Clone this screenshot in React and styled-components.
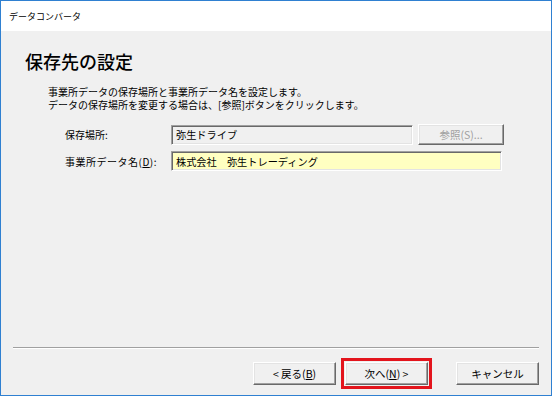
import styled, { createGlobalStyle } from 'styled-components';

const GlobalStyle = createGlobalStyle`
  * { box-sizing: border-box; }
  html, body {
    margin: 0;
    padding: 0;
    background: #ffffff;
  }
  body {
    font-family: "Noto Sans CJK JP", "Noto Sans", sans-serif;
    color: #000000;
  }
`;

const Window = styled.div`
  width: 552px;
  height: 396px;
  border: 1px solid #2f80d1;
  display: flex;
  flex-direction: column;
  background: #f0f0f0;
`;

const TitleBar = styled.div`
  height: 30px;
  flex: none;
  background: #ffffff;
  display: flex;
  align-items: center;
  padding-left: 8px;
  font-size: 9px;
  color: #000000;
`;

const Body = styled.div`
  flex: 1;
  display: flex;
  flex-direction: column;
  background: #f0f0f0;
`;

const Heading = styled.h1`
  margin: 19px 0 0 24px;
  font-size: 18px;
  line-height: 22px;
  font-weight: 500;
  color: #000000;
`;

const Description = styled.p`
  margin: 14px 0 0 47px;
  font-size: 10px;
  line-height: 12.5px;
`;

const Form = styled.div`
  margin-top: 13px;
  padding-left: 64px;
  display: grid;
  grid-template-columns: 106px 242px auto;
  row-gap: 6px;
  align-items: center;
  font-size: 10px;
`;

const Label = styled.label`
  white-space: nowrap;
  letter-spacing: ${p => p.$wide ? '0.5px' : '0'};
  u { text-decoration: underline; }
`;

const Field = styled.div`
  height: 20px;
  width: ${p => p.$width}px;
  grid-column: ${p => p.$span ? '2 / 4' : 'auto'};
  display: flex;
  align-items: center;
  padding-left: 4px;
  font-size: 10.2px;
  background: ${p => p.$bg};
  border: 1px solid;
  border-color: #a0a0a0 #ffffff #ffffff #a0a0a0;
  box-shadow: inset 1px 1px 0 #696969, inset -1px -1px 0 #e3e3e3;
  white-space: pre;
`;

const Button = styled.button`
  width: ${p => p.$width || 83}px;
  height: ${p => p.$height || 23}px;
  margin-left: ${p => p.$gap || 0}px;
  padding: 0;
  font-family: "Noto Sans CJK JP", "Noto Sans", sans-serif;
  font-size: 10.5px;
  color: ${p => p.disabled ? '#a0a0a0' : '#000000'};
  background: #f0f0f0;
  border: 1px solid;
  border-color: #ffffff #696969 #696969 #ffffff;
  box-shadow: inset -1px -1px 0 #a0a0a0, inset 1px 1px 0 #e3e3e3;
  outline: ${p => p.$highlight ? '3px solid #e3141c' : 'none'};
  outline-offset: 1px;
  u { text-decoration: underline; }
`;

const Footer = styled.div`
  margin-top: auto;
  padding: 0 12px 10px;
`;

const Divider = styled.div`
  height: 2px;
  border-top: 1px solid #a0a0a0;
  border-bottom: 1px solid #ffffff;
`;

const ButtonRow = styled.div`
  margin-top: 13px;
  display: flex;
  justify-content: flex-end;
`;

export default function App() {
  return (
    <>
      <GlobalStyle />
      <Window>
        <TitleBar>データコンバータ</TitleBar>
        <Body>
          <Heading>保存先の設定</Heading>
          <Description>
            事業所データの保存場所と事業所データ名を設定します。<br />
            データの保存場所を変更する場合は、[参照]ボタンをクリックします。
          </Description>
          <Form>
            <Label>保存場所:</Label>
            <Field $width={242} $bg="#f0f0f0">弥生ドライブ</Field>
            <Button disabled $width={86} $height={21} $gap={5}>参照(S)...</Button>
            <Label $wide>事業所データ名(<u>D</u>):</Label>
            <Field $width={331} $bg="#ffffc1" $span>株式会社　弥生トレーディング</Field>
          </Form>
          <Footer>
            <Divider />
            <ButtonRow>
              <Button>&lt; 戻る(<u>B</u>)</Button>
              <Button $gap={9} $highlight>次へ(<u>N</u>) &gt;</Button>
              <Button $gap={28}>キャンセル</Button>
            </ButtonRow>
          </Footer>
        </Body>
      </Window>
    </>
  );
}
